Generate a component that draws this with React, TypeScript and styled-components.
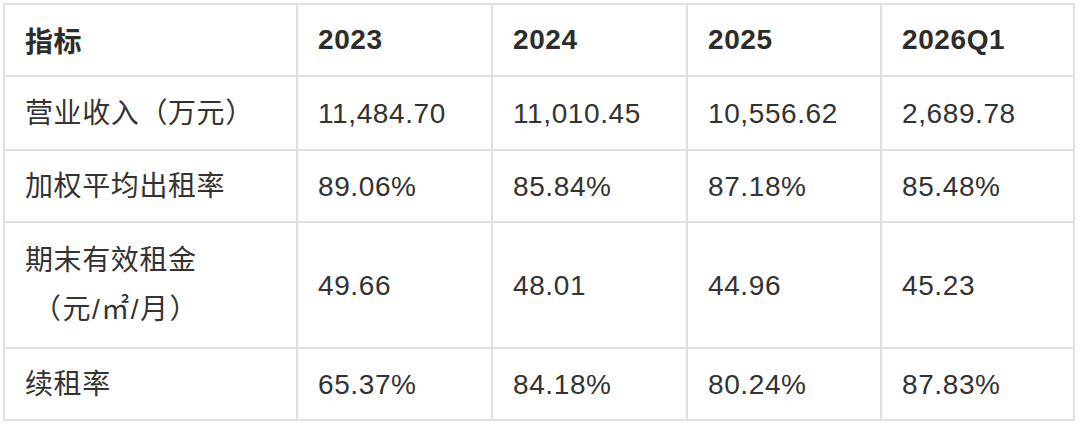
import * as React from 'react';
import styled, { createGlobalStyle } from 'styled-components';

const GlobalStyle = createGlobalStyle`
    html, body {
        margin: 0;
        padding: 0;
        background: #ffffff;
    }
`;

type Row = {
    label: string[];
    values: string[];
};

const HEADERS = ['指标', '2023', '2024', '2025', '2026Q1'];
const COLUMN_WIDTHS = [293, 195, 195, 194, 193];

const ROWS: Row[] = [
    { label: ['营业收入（万元）'], values: ['11,484.70', '11,010.45', '10,556.62', '2,689.78'] },
    { label: ['加权平均出租率'], values: ['89.06%', '85.84%', '87.18%', '85.48%'] },
    { label: ['期末有效租金', '（元/㎡/月）'], values: ['49.66', '48.01', '44.96', '45.23'] },
    { label: ['续租率'], values: ['65.37%', '84.18%', '80.24%', '87.83%'] },
];

const App: React.FC = () => (
    <>
        <GlobalStyle />
        <Page>
            <Table>
                <colgroup>
                    {COLUMN_WIDTHS.map((w, i) => (
                        <col key={i} style={{ width: w }} />
                    ))}
                </colgroup>
                <thead>
                    <tr>
                        {HEADERS.map((h) => (
                            <HeadCell key={h}>{h}</HeadCell>
                        ))}
                    </tr>
                </thead>
                <tbody>
                    {ROWS.map((row, r) => (
                        <tr key={row.label[0]}>
                            <Cell tall={row.label.length > 1} first={r === 0}>
                                {row.label.map((line, i) => (
                                    <LabelLine key={line} sub={i > 0}>
                                        {line}
                                    </LabelLine>
                                ))}
                            </Cell>
                            {row.values.map((v, i) => (
                                <Cell key={i} tall={row.label.length > 1} first={r === 0}>
                                    {v}
                                </Cell>
                            ))}
                        </tr>
                    ))}
                </tbody>
            </Table>
        </Page>
    </>
);

const BORDER = '2px solid #e0e0e0';

const Page = styled.div`
    padding: 3px;
    font-family: 'Liberation Sans', 'Noto Sans CJK SC', sans-serif;
    color: #333333;
`;

const Table = styled.table`
    width: 1071px;
    border-collapse: collapse;
    table-layout: fixed;
`;

const HeadCell = styled.th`
    border: ${BORDER};
    height: 72px;
    padding: 0 20px;
    text-align: left;
    vertical-align: middle;
    font-size: 28px;
    font-weight: bold;
    color: #2c2c2c;
    letter-spacing: 0.6px;
    box-sizing: border-box;
`;

const Cell = styled.td<{ tall: boolean; first: boolean }>`
    border: ${BORDER};
    height: ${({ tall, first }) => (tall ? '126px' : first ? '74px' : '72px')};
    padding: 0 20px;
    text-align: left;
    vertical-align: middle;
    font-size: 28px;
    line-height: 49px;
    letter-spacing: 0.6px;
    color: #333333;
    box-sizing: border-box;
`;

const LabelLine = styled.div<{ sub: boolean }>`
    white-space: nowrap;
    padding-left: ${({ sub }) => (sub ? '8px' : '0')};
    letter-spacing: ${({ sub }) => (sub ? '1.5px' : '0.6px')};
`;

export default App;
